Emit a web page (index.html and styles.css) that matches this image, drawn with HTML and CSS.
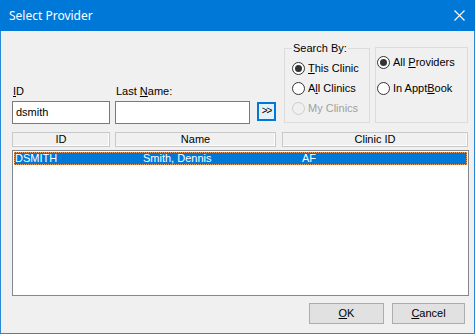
FILE: index.html
```html
<!DOCTYPE html>
<html lang="en">
<head>
  <meta charset="UTF-8" />
  <title>Select Provider</title>
  <link rel="stylesheet" href="styles.css">
</head>
<body>
  <div class="window">
    <div class="titlebar">
      <span class="title">Select Provider</span>
      <svg class="close" width="11" height="11" viewBox="0 0 11 11">
        <path d="M0.5 0.5 L10.5 10.5 M10.5 0.5 L0.5 10.5" stroke="#fff" stroke-width="1.1" fill="none" />
      </svg>
    </div>

    <div class="content">
      <div class="top">
        <div class="search-fields">
          <div class="field field-id">
            <div class="label"><u>I</u>D</div>
            <div class="input">dsmith</div>
          </div>
          <div class="field field-name">
            <div class="label">Last <u>N</u>ame:</div>
            <div class="input"></div>
          </div>
          <div class="go">&gt;&gt;</div>
        </div>

        <div class="group group-search">
          <span class="legend">Search By:</span>
          <div class="radio checked"><span class="circle"></span><span><u>T</u>his Clinic</span></div>
          <div class="radio"><span class="circle"></span><span>A<u>l</u>l Clinics</span></div>
          <div class="radio disabled"><span class="circle"></span><span>My Clinics</span></div>
        </div>

        <div class="group group-prov">
          <div class="radio checked"><span class="circle"></span><span>All <u>P</u>roviders</span></div>
          <div class="radio"><span class="circle"></span><span>In Appt<u>B</u>ook</span></div>
        </div>
      </div>

      <div class="headers">
        <div class="head head-id">ID</div>
        <div class="head head-name">Name</div>
        <div class="head head-clinic">Clinic ID</div>
      </div>

      <div class="list">
        <div class="row selected">
          <span class="cell c-id">DSMITH</span>
          <span class="cell c-name">Smith, Dennis</span>
          <span class="cell c-clinic">AF</span>
        </div>
      </div>

      <div class="actions">
        <div class="btn btn-ok"><u>O</u>K</div>
        <div class="btn btn-cancel"><u>C</u>ancel</div>
      </div>
    </div>
  </div>
</body>
</html>
```

FILE: styles.css
```css
* { box-sizing: border-box; }
html, body {
  margin: 0; padding: 0;
  background: #f0f0f0;
}
body {
  font-family: 'Liberation Sans', Arial, sans-serif;
  font-size: 11px;
  line-height: 13px;
  color: #000;
}
u { text-decoration: underline; text-underline-offset: 1px; }

.window {
  width: 475px;
  height: 334px;
  border: 1px solid #2b88d8;
  border-top: none;
  background: #f0f0f0;
}
.titlebar {
  height: 31px;
  margin: 0 -1px;
  background: #0078d7;
  color: #fff;
  display: flex;
  align-items: center;
  justify-content: space-between;
  padding: 0 10px 0 9px;
}
.title {
  font-family: 'Noto Sans', 'Open Sans', sans-serif;
  font-size: 12px;
  margin-top: -1px;
}
.close { display: block; }

.content {
  padding: 0 6px 0 11px;
}

.top {
  display: flex;
  height: 101px;
}
.search-fields {
  display: flex;
  align-items: flex-end;
  align-self: flex-end;
  margin-bottom: 8px;
}
.field-id { width: 98px; margin-right: 5px; }
.field-name { width: 135px; margin-right: 7px; }
.label { margin-bottom: 3px; padding-left: 1px; }
.input {
  height: 23px;
  border: 1px solid #7a7a7a;
  background: #fff;
  padding: 4px 3px;
}
.go {
  width: 19px;
  height: 19px;
  margin-bottom: 3px;
  border: 2px solid #0078d7;
  background: #e5f1fb;
  font-size: 10px;
  line-height: 14px;
  text-align: center;
  letter-spacing: -1px;
}

.group {
  position: relative;
  border: 1px solid #dcdcdc;
}
.group-search {
  width: 86px;
  height: 75px;
  margin-top: 17px;
  margin-left: 8px;
  padding: 9px 0 0 7px;
}
.group-prov {
  width: 93px;
  height: 76px;
  margin-top: 16px;
  margin-left: 5px;
  padding: 4px 0 0 1px;
  display: flex;
  flex-direction: column;
  gap: 6px;
}
.legend {
  position: absolute;
  top: -7px;
  left: 7px;
  padding: 0 1px;
  background: #f0f0f0;
}
.radio {
  display: flex;
  align-items: center;
  height: 20px;
  gap: 3px;
  white-space: nowrap;
}
.circle {
  width: 13px;
  height: 13px;
  border: 1px solid #333;
  border-radius: 50%;
  background: #fff;
  display: flex;
  align-items: center;
  justify-content: center;
}
.radio.checked .circle::after {
  content: "";
  width: 7px;
  height: 7px;
  border-radius: 50%;
  background: #333;
}
.radio.disabled { color: #a0a0a0; }
.radio.disabled .circle { border-color: #cccccc; background: #f0f0f0; }

.headers {
  display: flex;
  height: 15px;
}
.head {
  border: 1px solid #c8c8c8;
  box-shadow: inset -1px -1px 0 #fff;
  text-align: center;
  line-height: 13px;
}
.head-id { width: 98px; margin-right: 5px; }
.head-name { width: 161px; margin-right: 6px; }
.head-clinic { width: 186px; }

.list {
  margin-top: 3px;
  width: 457px;
  height: 146px;
  border: 1px solid #828790;
  background: #fff;
  padding: 1px;
}
.row {
  display: flex;
  height: 13px;
  padding-left: 1px;
}
.row.selected {
  background: #0078d7;
  color: #fff;
  outline: 1px dotted #f0a060;
  outline-offset: -1px;
}
.cell { white-space: nowrap; }
.c-id { width: 128px; }
.c-name { width: 159px; }

.actions {
  display: flex;
  justify-content: flex-end;
  gap: 8px;
  margin-top: 7px;
  padding-right: 3px;
}
.btn {
  height: 21px;
  border: 1px solid #adadad;
  background: #e1e1e1;
  text-align: center;
  line-height: 19px;
}
.btn-ok { width: 75px; }
.btn-cancel { width: 73px; }
```
